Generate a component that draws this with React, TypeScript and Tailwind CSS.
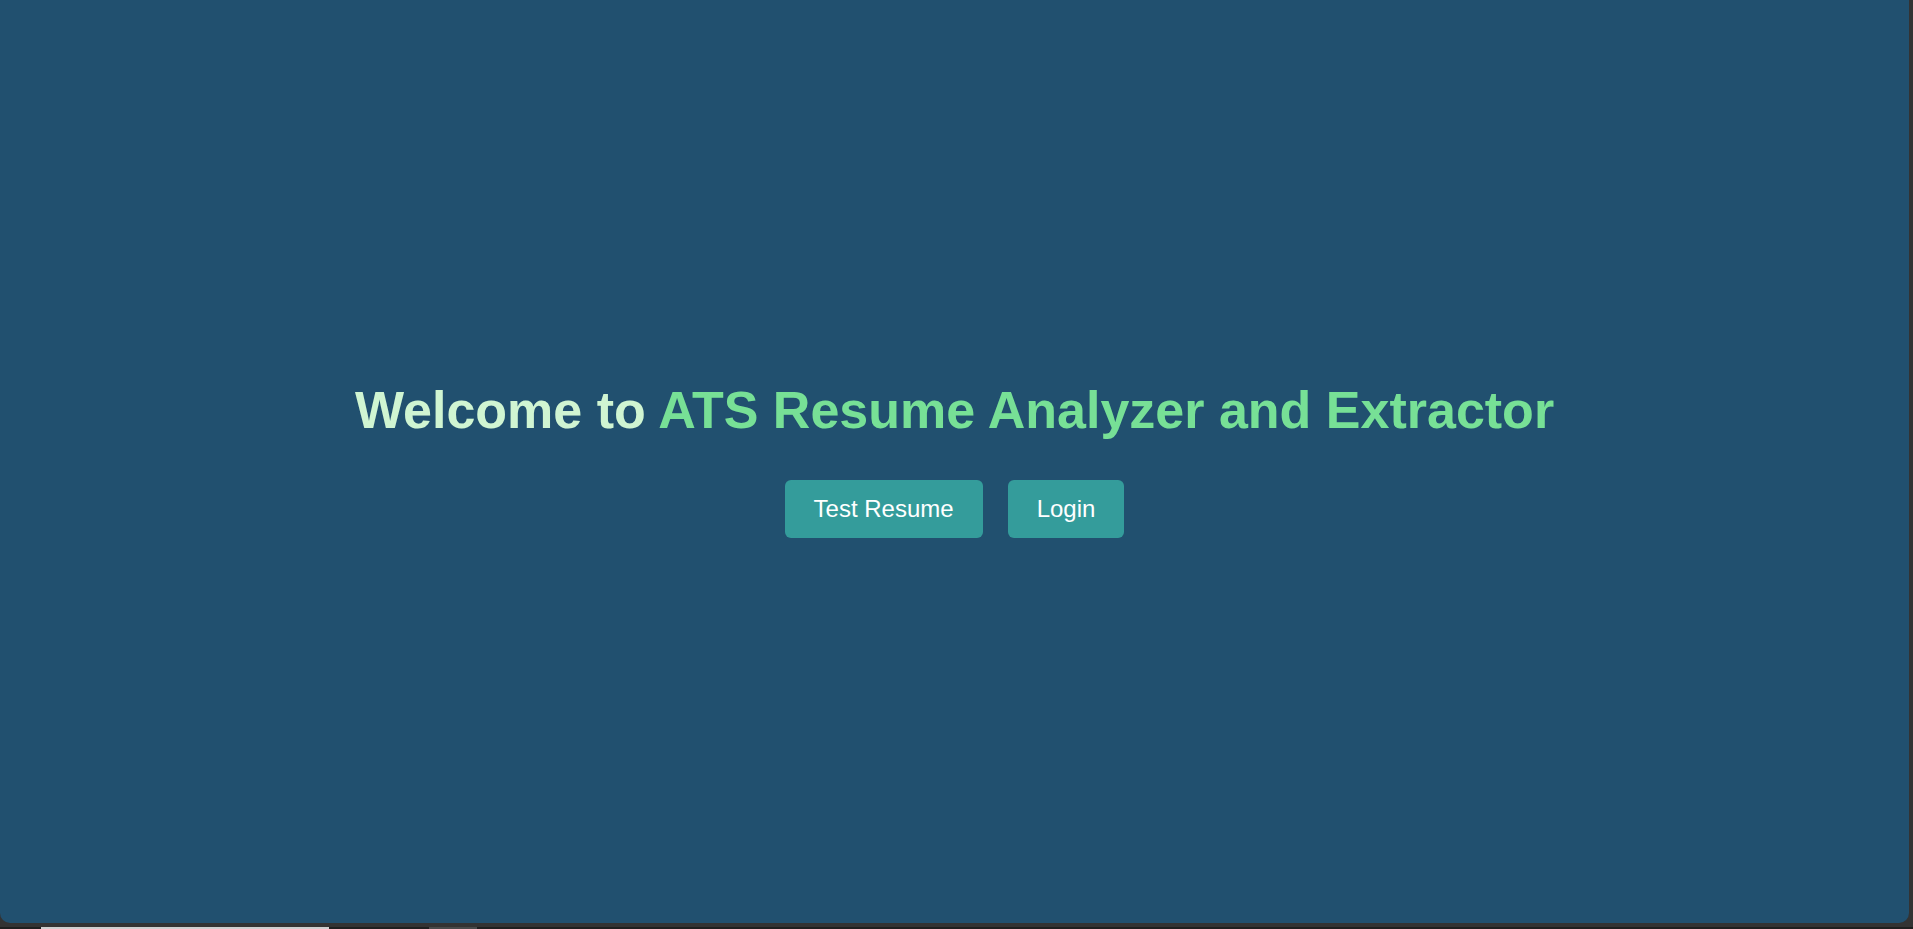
import React from "react";

const App: React.FC = () => {
  return (
    <div className="h-[929px] w-full bg-[#333333] flex flex-col overflow-hidden font-['Liberation_Sans',Arial,sans-serif]">
      <div className="flex flex-1">
        <main className="flex-1 mr-[4px] mb-[4px] pb-[5px] bg-[#21506f] rounded-b-[10px] flex flex-col items-center justify-center">
          <h1 className="text-[52px] font-bold leading-[60px] text-[#d0f5d2]">
            Welcome to <span className="text-[#77e096]">ATS Resume Analyzer and Extractor</span>
          </h1>
          <div className="flex gap-[25px] mt-[40px]">
            <button className="bg-[#349c9b] text-white text-[24px] leading-[28px] px-[29px] py-[15px] rounded-[6px]">
              Test Resume
            </button>
            <button className="bg-[#349c9b] text-white text-[24px] leading-[28px] px-[29px] py-[15px] rounded-[6px]">
              Login
            </button>
          </div>
        </main>
      </div>
      <div className="h-[2px] flex bg-[#1f1f1f]">
        <div className="ml-[41px] w-[288px] bg-[#cfcfcf]" />
        <div className="ml-[100px] w-[48px] bg-[#4a4a4a]" />
      </div>
    </div>
  );
};

export default App;
